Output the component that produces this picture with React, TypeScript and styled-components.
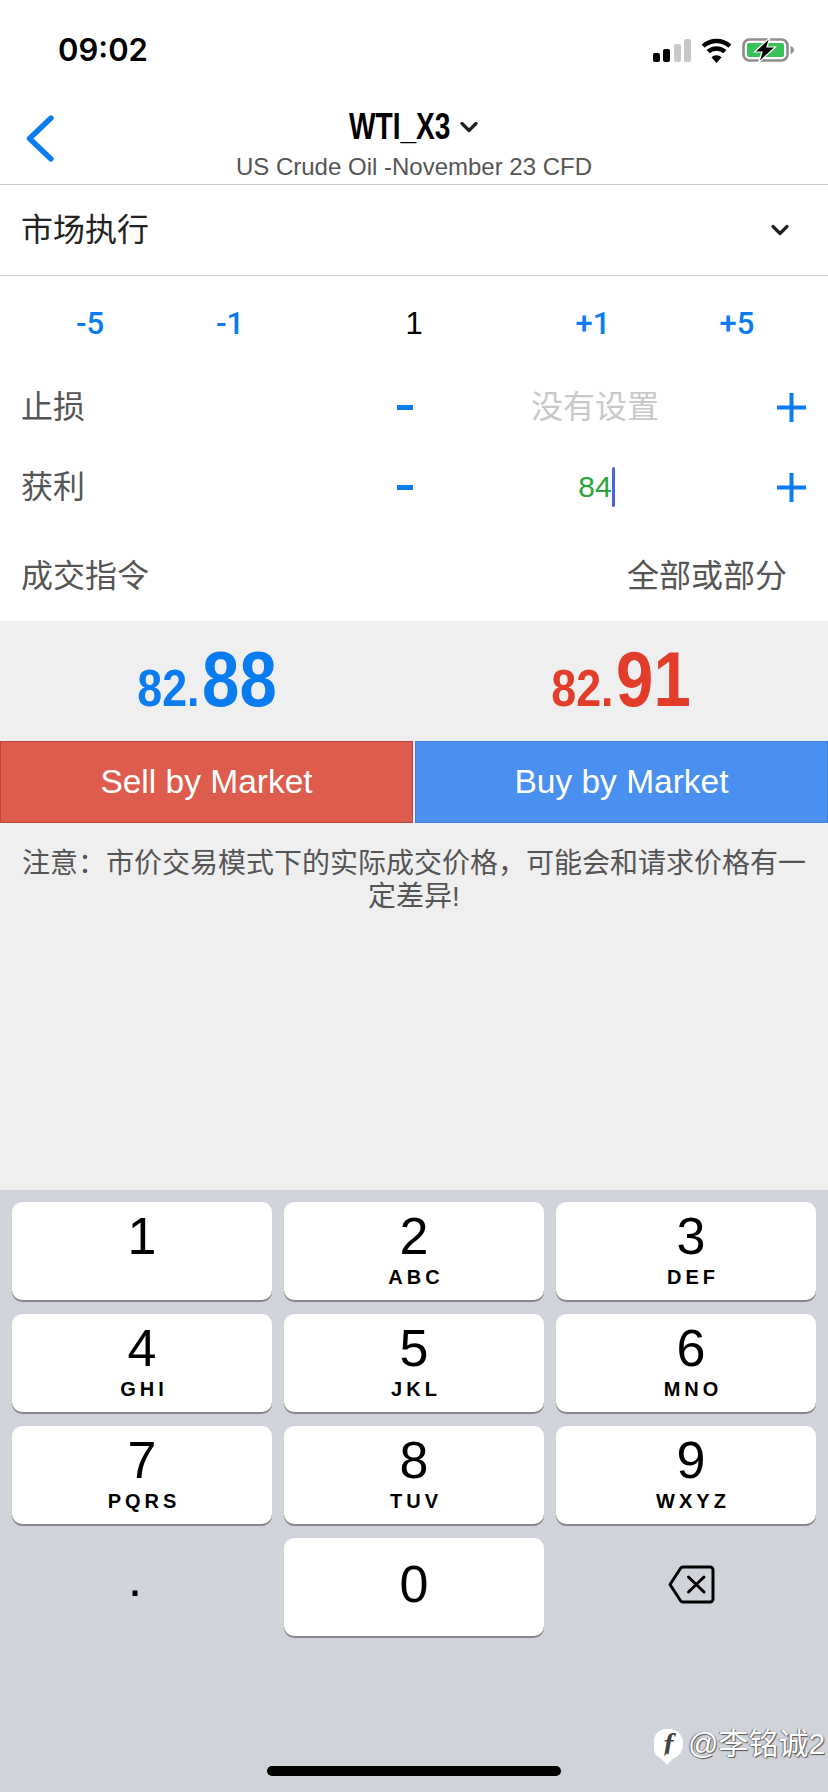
import React from 'react';
import styled, { createGlobalStyle } from 'styled-components';

const GlobalStyle = createGlobalStyle`
  html, body {
    margin: 0;
    padding: 0;
    background: #ffffff;
  }
  * {
    box-sizing: border-box;
  }
`;

const BLUE = '#0a7cf0';
const RED = '#e23c2a';

const keys = [
  { digit: '1', letters: '', shift: 0 },
  { digit: '2', letters: 'ABC', shift: 0 },
  { digit: '3', letters: 'DEF', shift: 10 },
  { digit: '4', letters: 'GHI', shift: 0 },
  { digit: '5', letters: 'JKL', shift: 0 },
  { digit: '6', letters: 'MNO', shift: 10 },
  { digit: '7', letters: 'PQRS', shift: 0 },
  { digit: '8', letters: 'TUV', shift: 0 },
  { digit: '9', letters: 'WXYZ', shift: 10 },
];

const signalBars = [
  { height: 9, on: true },
  { height: 13, on: true },
  { height: 18, on: false },
  { height: 23, on: false },
];

const SmallChevron: React.FC = () => (
  <svg width="18" height="12" viewBox="0 0 18 12" fill="none">
    <path d="M2 2.5 L9 9.5 L16 2.5" stroke="#222" strokeWidth="3.2" strokeLinecap="round" strokeLinejoin="round" />
  </svg>
);

const PlusIcon: React.FC = () => (
  <svg width="29" height="29" viewBox="0 0 29 29">
    <path d="M14.5 0 V29 M0 14.5 H29" stroke={BLUE} strokeWidth="4" />
  </svg>
);

const App: React.FC = () => {
  return (
    <Page>
      <GlobalStyle />
      <StatusBar>
        <Clock>09:02</Clock>
        <StatusIcons>
          <Signal>
            {signalBars.map((bar) => (
              <SignalBar key={bar.height} $height={bar.height} $on={bar.on} />
            ))}
          </Signal>
          <svg width="31" height="25" viewBox="0 0 31 25" fill="none">
            <path d="M2.1 8.1 A20 20 0 0 1 28.9 8.1" stroke="#000" strokeWidth="4.4" />
            <path d="M7.1 13.7 A12.5 12.5 0 0 1 23.9 13.7" stroke="#000" strokeWidth="4.4" />
            <path d="M15.5 25 L10.4 19.2 A7.5 7.5 0 0 1 20.6 19.2 Z" fill="#000" />
          </svg>
          <svg width="53" height="26" viewBox="0 0 53 26" fill="none">
            <rect x="1.5" y="2.5" width="44" height="21" rx="6" stroke="#8e8e8e" strokeWidth="2.6" />
            <rect x="5" y="6" width="37" height="14" rx="2" fill="#39c15a" />
            <path d="M48.5 9 C51 10 52 11.5 52 13 C52 14.5 51 16 48.5 17 Z" fill="#8e8e8e" />
            <path d="M28 0.5 L12.5 15 L20 15 L16.5 25.5 L33.5 10 L25 10 Z" fill="#000" stroke="#fff" strokeWidth="1.2" />
          </svg>
        </StatusIcons>
      </StatusBar>

      <NavBar>
        <BackButton>
          <svg width="28" height="47" viewBox="0 0 28 47" fill="none">
            <path d="M25 3 L3.5 23.5 L25 44" stroke={BLUE} strokeWidth="5.4" strokeLinecap="round" strokeLinejoin="round" />
          </svg>
        </BackButton>
        <NavCenter>
          <TitleRow>
            <TitleText>WTI_X3</TitleText>
            <SmallChevron />
          </TitleRow>
          <Subtitle>US Crude Oil -November 23 CFD</Subtitle>
        </NavCenter>
      </NavBar>

      <SelectRow>
        <SelectLabel>市场执行</SelectLabel>
        <SmallChevron />
      </SelectRow>

      <StepRow>
        <StepButton>-5</StepButton>
        <StepButton>-1</StepButton>
        <Volume>1</Volume>
        <StepButton>+1</StepButton>
        <StepButton $shift={8}>+5</StepButton>
      </StepRow>

      <LevelRow>
        <RowLabel>止损</RowLabel>
        <Minus />
        <Placeholder>没有设置</Placeholder>
        <PlusIcon />
      </LevelRow>
      <LevelRow>
        <RowLabel>获利</RowLabel>
        <Minus />
        <LevelValue>
          <GreenValue>
            84
            <Caret />
          </GreenValue>
        </LevelValue>
        <PlusIcon />
      </LevelRow>

      <FillRow>
        <RowLabel>成交指令</RowLabel>
        <RowLabel>全部或部分</RowLabel>
      </FillRow>

      <GrayArea>
        <Prices>
          <PriceCell>
            <Price $color={BLUE}>
              <PriceSmall>82.</PriceSmall>
              <PriceBig>88</PriceBig>
            </Price>
          </PriceCell>
          <PriceCell>
            <Price $color={RED}>
              <PriceSmall>82.</PriceSmall>
              <PriceBig>91</PriceBig>
            </Price>
          </PriceCell>
        </Prices>
        <TradeButtons>
          <TradeButton $bg="#de5c4e" $border="#b8483c">Sell by Market</TradeButton>
          <TradeButton $bg="#4a90f0" $border="#3f7ed4">Buy by Market</TradeButton>
        </TradeButtons>
        <Notice>注意：市价交易模式下的实际成交价格，可能会和请求价格有一定差异!</Notice>
      </GrayArea>

      <Keyboard>
        <KeyGrid>
          {keys.map((k) => (
            <Key key={k.digit} $shift={k.shift}>
              <KeyDigit>{k.digit}</KeyDigit>
              <KeyLetters>{k.letters}</KeyLetters>
            </Key>
          ))}
          <DotKey>.</DotKey>
          <Key $shift={0}>
            <ZeroDigit>0</ZeroDigit>
          </Key>
          <DeleteKey>
            <svg width="47" height="39" viewBox="0 0 47 39" fill="none">
              <path
                d="M15 2 H42 A3 3 0 0 1 45 5 V34 A3 3 0 0 1 42 37 H15 A3 3 0 0 1 12.6 35.8 L2 19.5 L12.6 3.2 A3 3 0 0 1 15 2 Z"
                stroke="#000"
                strokeWidth="3"
                strokeLinejoin="round"
              />
              <path d="M20.5 12 L36 27 M36 12 L20.5 27" stroke="#000" strokeWidth="3" strokeLinecap="round" />
            </svg>
          </DeleteKey>
        </KeyGrid>
        <HomeBar />
      </Keyboard>

      <Watermark>
        <WatermarkLogo>f</WatermarkLogo>
        <WatermarkText>@李铭诚2</WatermarkText>
      </Watermark>
    </Page>
  );
};

// Styled Components
const Page = styled.div`
  position: relative;
  width: 828px;
  height: 1792px;
  overflow: hidden;
  display: flex;
  flex-direction: column;
  background: #ffffff;
  font-family: 'Liberation Sans', 'Noto Sans CJK SC', sans-serif;
`;

const StatusBar = styled.div`
  height: 98px;
  flex: none;
  display: flex;
  justify-content: space-between;
  align-items: flex-start;
  padding: 37px 33px 0 58px;
`;

const Clock = styled.div`
  font-family: 'Inter', sans-serif;
  font-size: 31px;
  font-weight: 600;
  line-height: 25px;
  color: #000;
`;

const StatusIcons = styled.div`
  display: flex;
  align-items: flex-end;
  gap: 10px;
  height: 26px;
  margin-left: auto;

  svg {
    display: block;
  }
`;

const Signal = styled.div`
  display: flex;
  align-items: flex-end;
  gap: 3.5px;
  height: 24px;
  margin-bottom: 1px;
`;

const SignalBar = styled.div<{ $height: number; $on: boolean }>`
  width: 7px;
  height: ${(p) => p.$height}px;
  border-radius: 2px;
  background: ${(p) => (p.$on ? '#000' : '#c8c8c8')};
`;

const NavBar = styled.div`
  position: relative;
  height: 87px;
  flex: none;
  display: flex;
  justify-content: center;
  border-bottom: 1px solid #cfcfcf;
`;

const BackButton = styled.div`
  position: absolute;
  left: 26px;
  top: 17px;
`;

const NavCenter = styled.div`
  display: flex;
  flex-direction: column;
  align-items: center;
  padding-top: 11px;
`;

const TitleRow = styled.div`
  display: flex;
  align-items: center;
  gap: 10px;
  height: 36px;
`;

const TitleText = styled.span`
  display: inline-block;
  width: 101px;
  font-size: 36px;
  font-weight: 700;
  line-height: 36px;
  color: #000;
  white-space: nowrap;
  transform: scaleX(0.78);
  transform-origin: left center;
`;

const Subtitle = styled.div`
  margin-top: 8px;
  font-size: 24px;
  line-height: 28px;
  color: #555;
  white-space: nowrap;
`;

const SelectRow = styled.div`
  height: 91px;
  flex: none;
  display: flex;
  justify-content: space-between;
  align-items: center;
  padding: 0 39px 0 21px;
  border-bottom: 1px solid #cfcfcf;
`;

const SelectLabel = styled.div`
  font-size: 32px;
  line-height: 40px;
  color: #222;
`;

const StepRow = styled.div`
  height: 92px;
  flex: none;
  display: grid;
  grid-template-columns: 180px 100px 268px 90px 1fr;
  align-items: center;
  padding-top: 4px;
`;

const StepButton = styled.div<{ $shift?: number }>`
  font-family: 'Roboto', sans-serif;
  font-size: 31px;
  font-weight: 500;
  line-height: 36px;
  text-align: center;
  color: ${BLUE};
  padding-left: ${(p) => p.$shift ?? 0}px;
`;

const Volume = styled.div`
  font-size: 31px;
  line-height: 36px;
  text-align: center;
  color: #000;
`;

const LevelRow = styled.div`
  height: 80px;
  flex: none;
  display: grid;
  grid-template-columns: 376px 16px 1fr 29px;
  align-items: center;
  padding: 0 22px 2px 21px;

  svg {
    display: block;
  }
`;

const RowLabel = styled.div`
  font-size: 32px;
  line-height: 40px;
  color: #555;
`;

const Minus = styled.div`
  width: 16px;
  height: 5px;
  background: ${BLUE};
`;

const LevelValue = styled.div`
  display: flex;
  justify-content: center;
`;

const Placeholder = styled(LevelValue)`
  font-size: 32px;
  line-height: 40px;
  color: #c9c9c9;
`;

const GreenValue = styled.span`
  position: relative;
  font-size: 30px;
  line-height: 40px;
  color: #2aa63a;
`;

const Caret = styled.span`
  position: absolute;
  left: 100%;
  top: 0;
  width: 3px;
  height: 40px;
  border-radius: 2px;
  background: #4a63d8;
`;

const FillRow = styled.div`
  height: 93px;
  flex: none;
  display: flex;
  justify-content: space-between;
  align-items: center;
  padding: 3px 41px 0 21px;
`;

const GrayArea = styled.div`
  flex: 1;
  display: flex;
  flex-direction: column;
  background: #efeff0;
`;

const Prices = styled.div`
  height: 120px;
  flex: none;
  display: grid;
  grid-template-columns: 1fr 1fr;
`;

const PriceCell = styled.div`
  display: flex;
  justify-content: center;
  align-items: flex-end;
  padding-bottom: 17px;
`;

const Price = styled.div<{ $color: string }>`
  display: flex;
  align-items: baseline;
  gap: 3px;
  color: ${(p) => p.$color};
  font-weight: 700;
  transform: scaleX(0.86);
`;

const PriceSmall = styled.span`
  font-size: 52px;
  line-height: 72px;
`;

const PriceBig = styled.span`
  font-size: 78px;
  line-height: 72px;
`;

const TradeButtons = styled.div`
  height: 82px;
  flex: none;
  display: flex;
  gap: 2px;
`;

const TradeButton = styled.div<{ $bg: string; $border: string }>`
  flex: 1;
  display: flex;
  align-items: center;
  justify-content: center;
  font-size: 33.5px;
  color: #fff;
  background: ${(p) => p.$bg};
  border: 1px solid ${(p) => p.$border};
`;

const Notice = styled.div`
  padding: 24px 20px 0;
  font-size: 28px;
  line-height: 33px;
  text-align: center;
  color: #555;
`;

const Keyboard = styled.div`
  height: 602px;
  flex: none;
  display: flex;
  flex-direction: column;
  align-items: center;
  padding: 12px 12px 16px;
  background: #d1d3da;
`;

const KeyGrid = styled.div`
  width: 100%;
  display: grid;
  grid-template-columns: repeat(3, 260px);
  grid-auto-rows: 98px;
  column-gap: 12px;
  row-gap: 14px;
`;

const Key = styled.div<{ $shift: number }>`
  display: flex;
  flex-direction: column;
  align-items: center;
  padding-left: ${(p) => p.$shift}px;
  border-radius: 10px;
  background: #fff;
  box-shadow: 0 2px 0 #88898d;
  color: #000;
`;

const KeyDigit = styled.div`
  margin-top: 8px;
  font-size: 52px;
  line-height: 52px;
`;

const ZeroDigit = styled(KeyDigit)`
  margin-top: 20px;
`;

const KeyLetters = styled.div`
  margin-top: 5px;
  font-size: 20px;
  font-weight: 700;
  line-height: 20px;
  letter-spacing: 4px;
  padding-left: 4px;
`;

const DotKey = styled.div`
  display: flex;
  justify-content: center;
  padding: 14px 14px 0 0;
  font-size: 52px;
  line-height: 52px;
  color: #000;
`;

const DeleteKey = styled.div`
  display: flex;
  justify-content: center;
  align-items: flex-start;
  padding: 27px 0 0 10px;
`;

const HomeBar = styled.div`
  width: 294px;
  height: 10px;
  margin-top: auto;
  border-radius: 5px;
  background: #000;
`;

const Watermark = styled.div`
  position: absolute;
  left: 654px;
  top: 1728px;
  display: flex;
  align-items: center;
  gap: 5px;
`;

const WatermarkLogo = styled.div`
  position: relative;
  width: 29px;
  height: 30px;
  display: flex;
  align-items: center;
  justify-content: center;
  border-radius: 12px 14px 14px 10px;
  background: #fff;
  font-family: 'Liberation Serif', serif;
  font-size: 30px;
  font-style: italic;
  font-weight: 700;
  color: #444;

  &::after {
    content: '';
    position: absolute;
    left: 9px;
    bottom: -4px;
    width: 8px;
    height: 8px;
    background: #fff;
    transform: rotate(45deg);
  }
`;

const WatermarkText = styled.div`
  font-size: 30px;
  line-height: 32px;
  color: #fff;
  white-space: nowrap;
  text-shadow: 1px 1px 1px #555, -1px 0 1px #777;
`;

export default App;
